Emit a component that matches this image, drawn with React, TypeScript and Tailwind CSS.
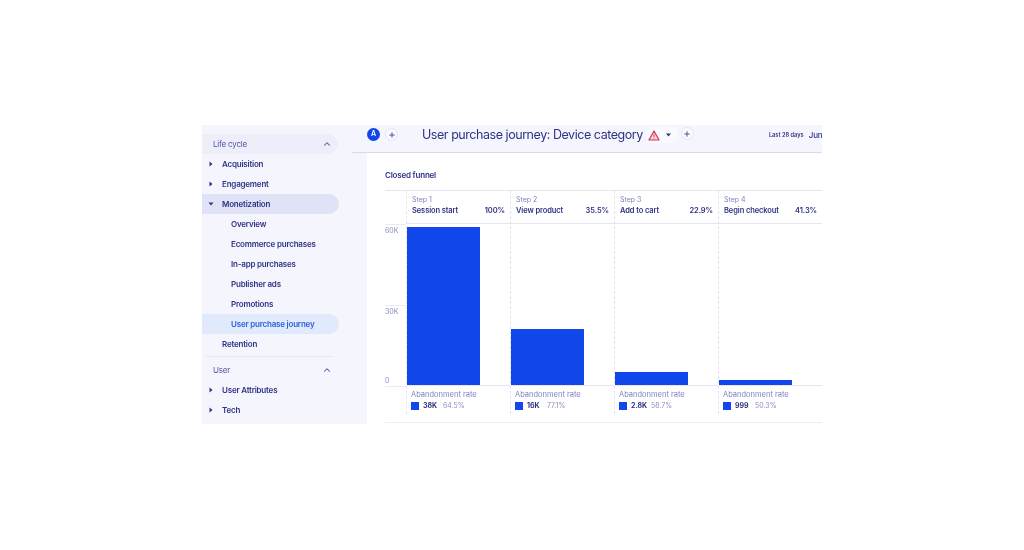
import { ChevronUp, Plus } from 'lucide-react';

const steps = [
  { step: 'Step 1', name: 'Session start', pct: '100%', bar: 'h-[158px]', value: '38K', rate: '64.5%' },
  { step: 'Step 2', name: 'View product', pct: '35.5%', bar: 'h-[56px]', value: '16K', rate: '77.1%' },
  { step: 'Step 3', name: 'Add to cart', pct: '22.9%', bar: 'h-[13px]', value: '2.8K', rate: '58.7%' },
  { step: 'Step 4', name: 'Begin checkout', pct: '41.3%', bar: 'h-[5px]', value: '999', rate: '50.3%' },
];

function Caret({ open }: { open?: boolean }) {
  return (
    <svg width="6" height="6" viewBox="0 0 6 6" className="fill-[#2f3285] shrink-0">
      {open ? <path d="M0.5 1.5h5L3 4.5z" /> : <path d="M1.5 0.5v5L4.5 3z" />}
    </svg>
  );
}

function NavGroup({ label }: { label: string }) {
  return (
    <div className="flex items-center gap-2 h-5 pl-[6px] w-[137px]">
      <Caret />
      <span>{label}</span>
    </div>
  );
}

function SubItem({ label, active }: { label: string; active?: boolean }) {
  return (
    <div className={`flex items-center h-5 pl-[29px] w-[137px] rounded-r-full ${active ? 'bg-[#e1eafb] text-[#2b62dc]' : ''}`}>
      {label}
    </div>
  );
}

function Sidebar() {
  return (
    <aside className="w-[150px] shrink-0 bg-[#f5f6fd] pt-[9px] text-[8px] tracking-[-0.2px] font-semibold text-[#2f3285]">
      <div className="flex items-center justify-between h-5 w-[136px] pl-[11px] pr-[6px] rounded-r-full bg-[#eceefa] font-normal text-[#50549c]">
        <span>Life cycle</span>
        <ChevronUp size={10} strokeWidth={2.5} />
      </div>
      <NavGroup label="Acquisition" />
      <NavGroup label="Engagement" />
      <div className="flex items-center gap-2 h-5 pl-[6px] w-[137px] rounded-r-full bg-[#dfe3f5]">
        <Caret open />
        <span>Monetization</span>
      </div>
      <SubItem label="Overview" />
      <SubItem label="Ecommerce purchases" />
      <SubItem label="In-app purchases" />
      <SubItem label="Publisher ads" />
      <SubItem label="Promotions" />
      <SubItem label="User purchase journey" active />
      <div className="flex items-center h-5 pl-5">Retention</div>
      <div className="h-px bg-[#e4e6f4] w-[127px] ml-[4px] mt-[2px]" />
      <div className="flex items-center justify-between h-5 w-[136px] pl-[11px] pr-[6px] mt-[3px] font-normal text-[#50549c]">
        <span>User</span>
        <ChevronUp size={10} strokeWidth={2.5} />
      </div>
      <NavGroup label="User Attributes" />
      <NavGroup label="Tech" />
    </aside>
  );
}

function RoundPlus() {
  return (
    <div className="flex items-center justify-center w-[13px] h-[13px] rounded-full bg-[#fafbff] border border-[#e2e4f2] text-[#50549c] shrink-0">
      <Plus size={8} strokeWidth={3} />
    </div>
  );
}

function TopBar() {
  return (
    <header className="flex items-start h-7 bg-[#f5f6fd] border-b border-[#d9dbe8] pt-[3px] pl-[15px] whitespace-nowrap">
      <div className="flex items-center justify-center w-[13px] h-[13px] rounded-full bg-[#1147ea] text-white text-[7px] font-semibold shrink-0">A</div>
      <div className="ml-[5px]"><RoundPlus /></div>
      <div className="w-px h-[14px] bg-[#e4e6f4] ml-[13px]" />
      <h1 className="ml-[11px] -mt-[1px] text-[12.5px] tracking-[-0.45px] leading-[16px] text-[#2f3285]">User purchase journey: Device category</h1>
      <div className="flex items-center h-4 w-[32px] ml-[3px] -mt-[1px] pl-[2px] rounded-full bg-[#f9f9fe] shrink-0">
        <svg width="12" height="11" viewBox="0 0 12 11">
          <path d="M6 1 11 10H1z" fill="#f9d5de" stroke="#d2345a" strokeWidth="1.2" strokeLinejoin="round" />
          <path d="M6 4v3M6 8v.8" stroke="#d2345a" strokeWidth=".9" />
        </svg>
        <svg width="5" height="4" viewBox="0 0 5 4" className="ml-[6px] fill-[#2f3285]">
          <path d="M0 .5h5L2.5 3.5z" />
        </svg>
      </div>
      <div className="ml-[3px] -mt-[1px]"><RoundPlus /></div>
      <span className="ml-[75px] mt-[3px] text-[5.7px] font-semibold text-[#2f3285]">Last 28 days</span>
      <span className="ml-[5px] mt-[1px] text-[8px] tracking-[-0.2px] font-medium text-[#2f3285]">Jun</span>
    </header>
  );
}

function Funnel() {
  return (
    <section className="flex-1 ml-[15px] bg-white pl-[18px] overflow-hidden">
      <h2 className="h-[37px] pt-[17px] text-[8px] tracking-[-0.2px] leading-[11px] font-semibold text-[#2f3285]">Closed funnel</h2>
      <div className="flex border-t border-[#e4e6f0]">
        <div className="w-[22px] shrink-0 border-r border-dashed border-[#e6e7f4]">
          <div className="h-[33px] -mr-px" />
          <div className="h-[81px] border-t border-[#e9ebf4] pt-px text-[7px] text-[#8a8fc4]">60K</div>
          <div className="flex flex-col justify-between h-[82px] border-t border-b border-[#e9ebf4] pt-px text-[7px] text-[#8a8fc4]">
            <span>30K</span>
            <span>0</span>
          </div>
        </div>
        {steps.map((s) => (
          <div key={s.step} className="w-[104px] shrink-0 border-r border-dashed border-[#e0e1f0]">
            <div className="h-[33px] border-b border-[#e4e6f0] pt-[4px] px-[5px]">
              <div className="text-[7px] leading-[9px] text-[#7d82c0]">{s.step}</div>
              <div className="flex justify-between mt-px text-[7.5px] tracking-[-0.1px] leading-[11px] font-semibold text-[#2f3285]">
                <span>{s.name}</span>
                <span>{s.pct}</span>
              </div>
            </div>
            <div className="flex items-end h-[162px] border-b border-[#e4e6f0]">
              <div className={`w-[73px] bg-[#1147ea] ${s.bar}`} />
            </div>
            <div className="h-[28px] pl-[4px] pt-[3px]">
              <div className="text-[7.5px] leading-[11px] text-[#7d82c0]">Abandonment rate</div>
              <div className="flex items-center mt-[1px] text-[7px] leading-[10px]">
                <span className="w-2 h-2 bg-[#1147ea] mr-[4px]" />
                <span className="w-[20px] font-bold text-[#2f3285]">{s.value}</span>
                <span className="text-[#8a8fc4]">{s.rate}</span>
              </div>
            </div>
          </div>
        ))}
      </div>
      <div className="h-px bg-[#eceef5] mt-[8px]" />
    </section>
  );
}

export default function App() {
  return (
    <div className="h-[550px] bg-white pt-[125px] pl-[202px] font-['Inter',sans-serif] blur-[0.7px]">
      <div className="flex w-[620px] h-[299px] overflow-hidden bg-[#f5f6fd]">
        <Sidebar />
        <main className="flex-1 min-w-0 flex flex-col overflow-hidden">
          <TopBar />
          <Funnel />
        </main>
      </div>
    </div>
  );
}
